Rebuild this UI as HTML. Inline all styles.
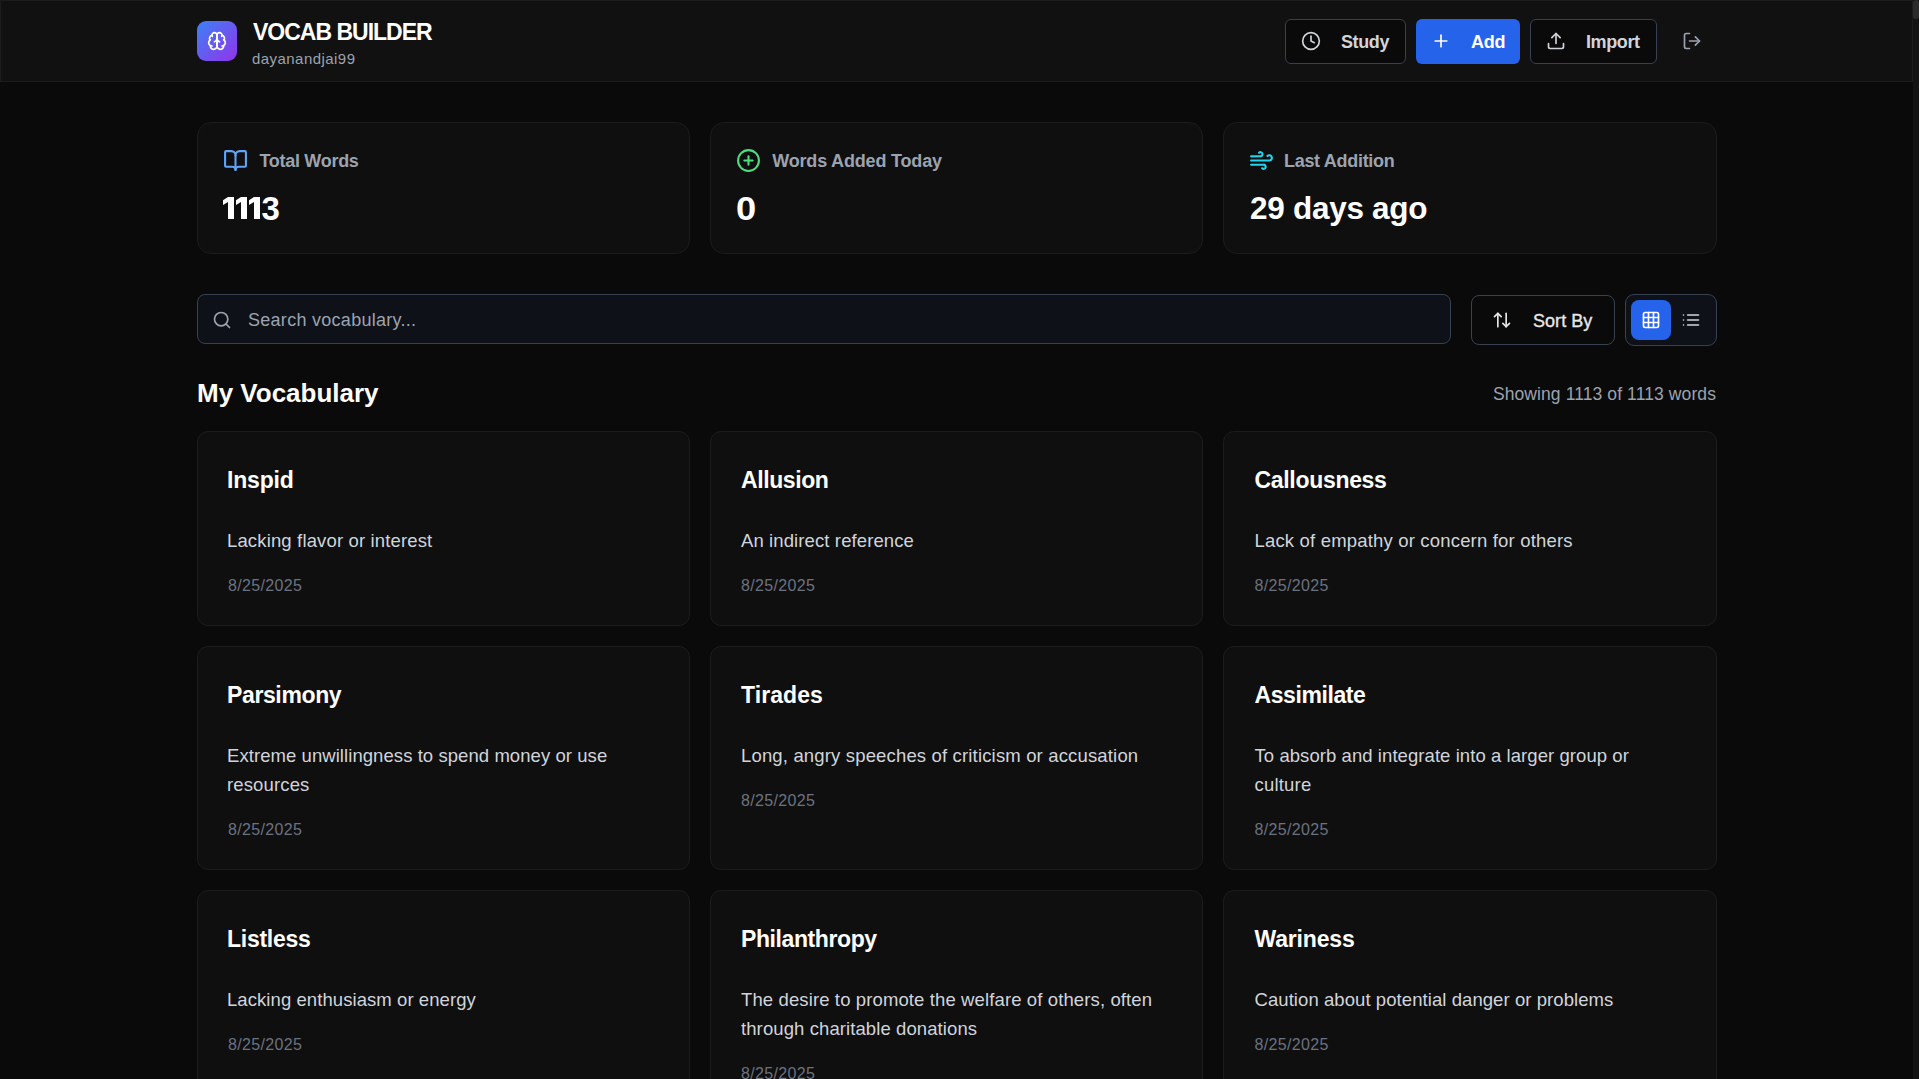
<!DOCTYPE html>
<html><head><meta charset="utf-8"><title>Vocab Builder</title>
<style>
html,body{margin:0;padding:0;background:#0a0a0a;width:1919px;height:1079px;overflow:hidden;font-family:"Liberation Sans", sans-serif}
.t{position:absolute;white-space:nowrap;line-height:1}
</style></head><body>
<div style="position:absolute;left:0px;top:0px;width:1913px;height:82px;box-sizing:border-box;background:#111111;border:1px solid #1c1c1c"></div>
<div style="position:absolute;left:1913px;top:0px;width:6px;height:1079px;box-sizing:border-box;background:#131313"></div>
<div style="position:absolute;left:1913px;top:0px;width:6px;height:19px;box-sizing:border-box;background:#2b2b2b;border-radius:3px"></div>
<div style="position:absolute;left:197px;top:21px;width:40px;height:40px;border-radius:9px;background:linear-gradient(135deg,#3b82f6,#9333ea)"></div>
<svg style="position:absolute;left:207px;top:31px" width="20" height="20" viewBox="0 0 24 24" fill="none" stroke="#fff" stroke-width="2" stroke-linecap="round" stroke-linejoin="round" ><path d="M12 5a3 3 0 1 0-5.997.125 4 4 0 0 0-2.526 5.77 4 4 0 0 0 .556 6.588A4 4 0 1 0 12 18Z"/><path d="M12 5a3 3 0 1 1 5.997.125 4 4 0 0 1 2.526 5.77 4 4 0 0 1-.556 6.588A4 4 0 1 1 12 18Z"/><path d="M15 13a4.5 4.5 0 0 1-3-4 4.5 4.5 0 0 1-3 4"/><path d="M17.599 6.5a3 3 0 0 0 .399-1.375"/><path d="M6.003 5.125A3 3 0 0 0 6.401 6.5"/><path d="M3.477 10.896a4 4 0 0 1 .585-.396"/><path d="M19.938 10.5a4 4 0 0 1 .585.396"/><path d="M6 18a4 4 0 0 1-1.967-.516"/><path d="M19.967 17.484A4 4 0 0 1 18 18"/></svg>
<div class="t" style="left:253px;top:21px;font-size:23px;color:#ffffff;font-weight:700;letter-spacing:-1.0px;">VOCAB BUILDER</div>
<div class="t" style="left:252px;top:51px;font-size:15px;color:#9ca3af;font-weight:400;letter-spacing:0.45px;">dayanandjai99</div>
<div style="position:absolute;left:1285px;top:19px;width:121px;height:45px;box-sizing:border-box;border:1px solid #374151;border-radius:6px;background:#0a0a0a"></div>
<svg style="position:absolute;left:1301px;top:31px" width="20" height="20" viewBox="0 0 24 24" fill="none" stroke="#d1d5db" stroke-width="2" stroke-linecap="round" stroke-linejoin="round" ><circle cx="12" cy="12" r="10"/><polyline points="12 6 12 12 16 14"/></svg>
<div class="t" style="left:1341px;top:33px;font-size:18px;color:#d1d5db;font-weight:700;letter-spacing:-0.4px;">Study</div>
<div style="position:absolute;left:1416px;top:19px;width:104px;height:45px;box-sizing:border-box;background:#2563eb;border-radius:6px"></div>
<svg style="position:absolute;left:1431px;top:31px" width="20" height="20" viewBox="0 0 24 24" fill="none" stroke="#fff" stroke-width="2" stroke-linecap="round" stroke-linejoin="round" ><path d="M5 12h14"/><path d="M12 5v14"/></svg>
<div class="t" style="left:1471px;top:33px;font-size:18px;color:#fff;font-weight:700;letter-spacing:-0.3px;">Add</div>
<div style="position:absolute;left:1530px;top:19px;width:127px;height:45px;box-sizing:border-box;border:1px solid #374151;border-radius:6px;background:#0a0a0a"></div>
<svg style="position:absolute;left:1546px;top:31px" width="20" height="20" viewBox="0 0 24 24" fill="none" stroke="#d1d5db" stroke-width="2" stroke-linecap="round" stroke-linejoin="round" ><path d="M21 15v4a2 2 0 0 1-2 2H5a2 2 0 0 1-2-2v-4"/><polyline points="17 8 12 3 7 8"/><line x1="12" x2="12" y1="3" y2="15"/></svg>
<div class="t" style="left:1586px;top:33px;font-size:18px;color:#d1d5db;font-weight:700;letter-spacing:-0.4px;">Import</div>
<svg style="position:absolute;left:1682px;top:31px" width="20" height="20" viewBox="0 0 24 24" fill="none" stroke="#9ca3af" stroke-width="2" stroke-linecap="round" stroke-linejoin="round" ><path d="M9 21H5a2 2 0 0 1-2-2V5a2 2 0 0 1 2-2h4"/><polyline points="16 17 21 12 16 7"/><line x1="21" x2="9" y1="12" y2="12"/></svg>
<div style="position:absolute;left:197px;top:122px;width:493px;height:132px;box-sizing:border-box;background:#0f0f0f;border:1px solid #1c1c1c;border-radius:14px"></div>
<div style="position:absolute;left:710px;top:122px;width:493px;height:132px;box-sizing:border-box;background:#0f0f0f;border:1px solid #1c1c1c;border-radius:14px"></div>
<div style="position:absolute;left:1223px;top:122px;width:494px;height:132px;box-sizing:border-box;background:#0f0f0f;border:1px solid #1c1c1c;border-radius:14px"></div>
<svg style="position:absolute;left:223px;top:148px" width="25" height="25" viewBox="0 0 24 24" fill="none" stroke="#60a5fa" stroke-width="2" stroke-linecap="round" stroke-linejoin="round" ><path d="M12 7v14"/><path d="M3 18a1 1 0 0 1-1-1V4a1 1 0 0 1 1-1h5a4 4 0 0 1 4 4 4 4 0 0 1 4-4h5a1 1 0 0 1 1 1v13a1 1 0 0 1-1 1h-6a3 3 0 0 0-3 3 3 3 0 0 0-3-3z"/></svg>
<svg style="position:absolute;left:736px;top:148px" width="25" height="25" viewBox="0 0 24 24" fill="none" stroke="#4ade80" stroke-width="2" stroke-linecap="round" stroke-linejoin="round" ><circle cx="12" cy="12" r="10"/><path d="M8 12h8"/><path d="M12 8v8"/></svg>
<svg style="position:absolute;left:1248.5px;top:147.5px" width="25" height="25" viewBox="0 0 24 24" fill="none" stroke="#22d3ee" stroke-width="2" stroke-linecap="round" stroke-linejoin="round" ><path d="M17.7 7.7a2.5 2.5 0 1 1 1.8 4.3H2"/><path d="M9.6 4.6A2 2 0 1 1 11 8H2"/><path d="M12.6 19.4A2 2 0 1 0 14 16H2"/></svg>
<div class="t" style="left:259.5px;top:152px;font-size:18px;color:#9ca3af;font-weight:700;letter-spacing:-0.3px;">Total Words</div>
<div class="t" style="left:772.2px;top:152px;font-size:18px;color:#9ca3af;font-weight:700;letter-spacing:-0.18px;">Words Added Today</div>
<div class="t" style="left:1284px;top:152px;font-size:18px;color:#9ca3af;font-weight:700;letter-spacing:-0.3px;">Last Addition</div>
<svg style="position:absolute;left:0;top:0" width="300" height="240" fill="#fff"><polygon points='223,200.2 228,197 234,197 234,219 228,219 228,202 223,205'/><polygon points='236,200.2 241,197 247,197 247,219 241,219 241,202 236,205'/><polygon points='249,200.2 254,197 260,197 260,219 254,219 254,202 249,205'/></svg>
<div class="t" style="left:261.5px;top:192px;font-size:33px;color:#fff;font-weight:700;letter-spacing:0px;">3</div>
<div class="t" style="left:736px;top:192px;font-size:33px;color:#fff;font-weight:700;letter-spacing:0px;transform:scaleX(1.1);transform-origin:0 0">0</div>
<div class="t" style="left:1250px;top:193px;font-size:31.5px;color:#fff;font-weight:700;letter-spacing:-0.28px;">29 days ago</div>
<div style="position:absolute;left:197px;top:294px;width:1254px;height:50px;box-sizing:border-box;background:#0e1118;border:1px solid #374151;border-radius:8px"></div>
<svg style="position:absolute;left:212px;top:310px" width="20" height="20" viewBox="0 0 24 24" fill="none" stroke="#9ca3af" stroke-width="2" stroke-linecap="round" stroke-linejoin="round" ><circle cx="11" cy="11" r="8"/><path d="m21 21-4.3-4.3"/></svg>
<div class="t" style="left:248px;top:311px;font-size:18px;color:#9ca3af;font-weight:400;letter-spacing:0.28px;">Search vocabulary...</div>
<div style="position:absolute;left:1471px;top:295px;width:144px;height:50px;box-sizing:border-box;background:#0a0a0a;border:1px solid #374151;border-radius:8px"></div>
<svg style="position:absolute;left:1492px;top:310px" width="20" height="20" viewBox="0 0 24 24" fill="none" stroke="#e5e7eb" stroke-width="2" stroke-linecap="round" stroke-linejoin="round" ><path d="m21 16-4 4-4-4"/><path d="M17 20V4"/><path d="m3 8 4-4 4 4"/><path d="M7 4v16"/></svg>
<div class="t" style="left:1533px;top:312px;font-size:18px;color:#e5e7eb;font-weight:400;letter-spacing:0.05px;-webkit-text-stroke:0.35px #e5e7eb">Sort By</div>
<div style="position:absolute;left:1625px;top:294px;width:92px;height:52px;box-sizing:border-box;background:#0e1118;border:1px solid #374151;border-radius:9px"></div>
<div style="position:absolute;left:1631px;top:300px;width:40px;height:40px;box-sizing:border-box;background:#2563eb;border-radius:8px"></div>
<svg style="position:absolute;left:1641px;top:310px" width="20" height="20" viewBox="0 0 24 24" fill="none" stroke="#fff" stroke-width="2" stroke-linecap="round" stroke-linejoin="round" ><rect width="18" height="18" x="3" y="3" rx="2"/><path d="M3 9h18"/><path d="M3 15h18"/><path d="M9 3v18"/><path d="M15 3v18"/></svg>
<svg style="position:absolute;left:1681px;top:310px" width="20" height="20" viewBox="0 0 24 24" fill="none" stroke="#d1d5db" stroke-width="2" stroke-linecap="round" stroke-linejoin="round" ><path d="M3 12h.01"/><path d="M3 18h.01"/><path d="M3 6h.01"/><path d="M8 12h13"/><path d="M8 18h13"/><path d="M8 6h13"/></svg>
<div class="t" style="left:197px;top:380px;font-size:26px;color:#fff;font-weight:700;letter-spacing:0px;">My Vocabulary</div>
<div class="t" style="right:203px;top:386px;font-size:17.5px;color:#9ca3af;font-weight:400;letter-spacing:0.1px">Showing 1113 of 1113 words</div>
<div style="position:absolute;left:197px;top:431px;width:493px;height:195px;box-sizing:border-box;background:#0f0f0f;border:1px solid #1c1c1c;border-radius:11px"></div>
<div class="t" style="left:227px;top:469px;font-size:23px;color:#fff;font-weight:700;letter-spacing:-0.2px;">Inspid</div>
<div class="t" style="left:227px;top:532px;font-size:18.5px;color:#d1d5db;font-weight:400;letter-spacing:0.148px;">Lacking flavor or interest</div>
<div class="t" style="left:228px;top:578px;font-size:16px;color:#6b7280;font-weight:400;letter-spacing:0.35px;">8/25/2025</div>
<div style="position:absolute;left:710px;top:431px;width:493px;height:195px;box-sizing:border-box;background:#0f0f0f;border:1px solid #1c1c1c;border-radius:11px"></div>
<div class="t" style="left:741px;top:469px;font-size:23px;color:#fff;font-weight:700;letter-spacing:-0.414px;">Allusion</div>
<div class="t" style="left:741px;top:532px;font-size:18.5px;color:#d1d5db;font-weight:400;letter-spacing:0.11px;">An indirect reference</div>
<div class="t" style="left:741px;top:578px;font-size:16px;color:#6b7280;font-weight:400;letter-spacing:0.35px;">8/25/2025</div>
<div style="position:absolute;left:1223px;top:431px;width:494px;height:195px;box-sizing:border-box;background:#0f0f0f;border:1px solid #1c1c1c;border-radius:11px"></div>
<div class="t" style="left:1254.5px;top:469px;font-size:23px;color:#fff;font-weight:700;letter-spacing:-0.31px;">Callousness</div>
<div class="t" style="left:1254.5px;top:532px;font-size:18.5px;color:#d1d5db;font-weight:400;letter-spacing:0.178px;">Lack of empathy or concern for others</div>
<div class="t" style="left:1254.5px;top:578px;font-size:16px;color:#6b7280;font-weight:400;letter-spacing:0.35px;">8/25/2025</div>
<div style="position:absolute;left:197px;top:646px;width:493px;height:224px;box-sizing:border-box;background:#0f0f0f;border:1px solid #1c1c1c;border-radius:11px"></div>
<div class="t" style="left:227px;top:684px;font-size:23px;color:#fff;font-weight:700;letter-spacing:-0.375px;">Parsimony</div>
<div class="t" style="left:227px;top:747px;font-size:18.5px;color:#d1d5db;font-weight:400;letter-spacing:0.067px;">Extreme unwillingness to spend money or use</div>
<div class="t" style="left:227px;top:776px;font-size:18.5px;color:#d1d5db;font-weight:400;letter-spacing:0.138px;">resources</div>
<div class="t" style="left:228px;top:822px;font-size:16px;color:#6b7280;font-weight:400;letter-spacing:0.35px;">8/25/2025</div>
<div style="position:absolute;left:710px;top:646px;width:493px;height:224px;box-sizing:border-box;background:#0f0f0f;border:1px solid #1c1c1c;border-radius:11px"></div>
<div class="t" style="left:741px;top:684px;font-size:23px;color:#fff;font-weight:700;letter-spacing:0.083px;">Tirades</div>
<div class="t" style="left:741px;top:747px;font-size:18.5px;color:#d1d5db;font-weight:400;letter-spacing:0.161px;">Long, angry speeches of criticism or accusation</div>
<div class="t" style="left:741px;top:793px;font-size:16px;color:#6b7280;font-weight:400;letter-spacing:0.35px;">8/25/2025</div>
<div style="position:absolute;left:1223px;top:646px;width:494px;height:224px;box-sizing:border-box;background:#0f0f0f;border:1px solid #1c1c1c;border-radius:11px"></div>
<div class="t" style="left:1254.5px;top:684px;font-size:23px;color:#fff;font-weight:700;letter-spacing:-0.411px;">Assimilate</div>
<div class="t" style="left:1254.5px;top:747px;font-size:18.5px;color:#d1d5db;font-weight:400;letter-spacing:0.069px;">To absorb and integrate into a larger group or</div>
<div class="t" style="left:1254.5px;top:776px;font-size:18.5px;color:#d1d5db;font-weight:400;letter-spacing:0.2px;">culture</div>
<div class="t" style="left:1254.5px;top:822px;font-size:16px;color:#6b7280;font-weight:400;letter-spacing:0.35px;">8/25/2025</div>
<div style="position:absolute;left:197px;top:890px;width:493px;height:224px;box-sizing:border-box;background:#0f0f0f;border:1px solid #1c1c1c;border-radius:11px"></div>
<div class="t" style="left:227px;top:928px;font-size:23px;color:#fff;font-weight:700;letter-spacing:-0.271px;">Listless</div>
<div class="t" style="left:227px;top:991px;font-size:18.5px;color:#d1d5db;font-weight:400;letter-spacing:0.074px;">Lacking enthusiasm or energy</div>
<div class="t" style="left:228px;top:1037px;font-size:16px;color:#6b7280;font-weight:400;letter-spacing:0.35px;">8/25/2025</div>
<div style="position:absolute;left:710px;top:890px;width:493px;height:224px;box-sizing:border-box;background:#0f0f0f;border:1px solid #1c1c1c;border-radius:11px"></div>
<div class="t" style="left:741px;top:928px;font-size:23px;color:#fff;font-weight:700;letter-spacing:-0.4px;">Philanthropy</div>
<div class="t" style="left:741px;top:991px;font-size:18.5px;color:#d1d5db;font-weight:400;letter-spacing:0.12px;">The desire to promote the welfare of others, often</div>
<div class="t" style="left:741px;top:1020px;font-size:18.5px;color:#d1d5db;font-weight:400;letter-spacing:0.096px;">through charitable donations</div>
<div class="t" style="left:741px;top:1066px;font-size:16px;color:#6b7280;font-weight:400;letter-spacing:0.35px;">8/25/2025</div>
<div style="position:absolute;left:1223px;top:890px;width:494px;height:224px;box-sizing:border-box;background:#0f0f0f;border:1px solid #1c1c1c;border-radius:11px"></div>
<div class="t" style="left:1254.5px;top:928px;font-size:23px;color:#fff;font-weight:700;letter-spacing:-0.171px;">Wariness</div>
<div class="t" style="left:1254.5px;top:991px;font-size:18.5px;color:#d1d5db;font-weight:400;letter-spacing:0.073px;">Caution about potential danger or problems</div>
<div class="t" style="left:1254.5px;top:1037px;font-size:16px;color:#6b7280;font-weight:400;letter-spacing:0.35px;">8/25/2025</div>
</body></html>
